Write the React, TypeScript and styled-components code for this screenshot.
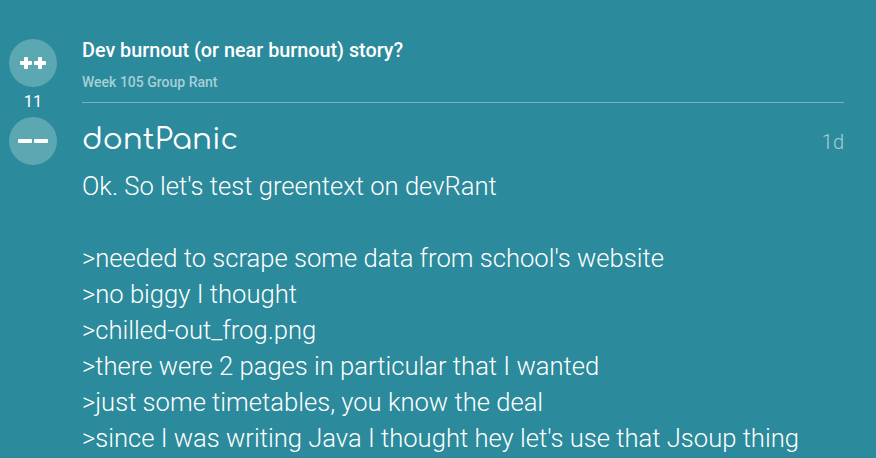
import React from "react";
import styled, { createGlobalStyle } from "styled-components";

const Global = createGlobalStyle`
  html, body { margin: 0; padding: 0; background: #2b8a9b; }
  body { font-family: Roboto, "Liberation Sans", sans-serif; overflow: hidden; }
`;

const Page = styled.div`
  display: flex;
  align-items: flex-start;
  height: 458px;
  padding: 39px 32px 0 9px;
  box-sizing: border-box;
  background: #2b8a9b;
  color: #fff;
`;

const VoteCol = styled.div`
  display: flex;
  flex-direction: column;
  align-items: center;
  width: 48px;
  flex: none;
`;

const VoteBtn = styled.div`
  width: 48px;
  height: 48px;
  border-radius: 50%;
  background: #5ba7b2;
  display: flex;
  align-items: center;
  justify-content: center;
  gap: 2px;
`;

const Plus = styled.span`
  position: relative;
  width: 12px;
  height: 12px;
  &::before, &::after {
    content: "";
    position: absolute;
    background: #fff;
    border-radius: 1px;
  }
  &::before { left: 0; right: 0; top: 4px; height: 4px; }
  &::after { top: 0; bottom: 0; left: 4px; width: 4px; }
`;

const Minus = styled.span`
  width: 14px;
  height: 4px;
  background: #fff;
  border-radius: 1px;
`;

const Score = styled.div`
  font-size: 16.5px;
  line-height: 30px;
  color: #ffffff;
`;

const Content = styled.div`
  flex: 1;
  margin-left: 25px;
  display: flex;
  flex-direction: column;
`;

const Title = styled.div`
  font-size: 19.8px;
  font-weight: 500;
  line-height: 24px;
`;

const Sub = styled.div`
  font-size: 14px;
  font-weight: 500;
  line-height: 18px;
  margin-top: 10px;
  color: #a6d0d7;
`;

const Divider = styled.div`
  height: 1px;
  background: rgba(255, 255, 255, 0.35);
  margin-top: 11px;
`;

const UserRow = styled.div`
  display: flex;
  align-items: center;
  justify-content: space-between;
  margin-top: 16px;
  height: 40px;
`;

const Username = styled.div`
  font-family: "Comfortaa", "Quicksand", Lato, Roboto, sans-serif;
  font-size: 29.5px;
  font-weight: 400;
`;

const Time = styled.div`
  font-size: 20px;
  font-weight: 300;
  color: #a6d0d7;
  padding-top: 5px;
`;

const Body = styled.div`
  margin-top: 9px;
  font-size: 25.6px;
  font-weight: 300;
  line-height: 36px;
  white-space: pre-wrap;
`;

const text = `Ok. So let's test greentext on devRant

>needed to scrape some data from school's website
>no biggy I thought
>chilled-out_frog.png
>there were 2 pages in particular that I wanted
>just some timetables, you know the deal
>since I was writing Java I thought hey let's use that Jsoup thing`;

export default function App() {
  return (
    <>
      <Global />
      <Page>
        <VoteCol>
          <VoteBtn>
            <Plus />
            <Plus />
          </VoteBtn>
          <Score>11</Score>
          <VoteBtn>
            <Minus />
            <Minus />
          </VoteBtn>
        </VoteCol>
        <Content>
          <Title>Dev burnout (or near burnout) story?</Title>
          <Sub>Week 105 Group Rant</Sub>
          <Divider />
          <UserRow>
            <Username>dontPanic</Username>
            <Time>1d</Time>
          </UserRow>
          <Body>{text}</Body>
        </Content>
      </Page>
    </>
  );
}
